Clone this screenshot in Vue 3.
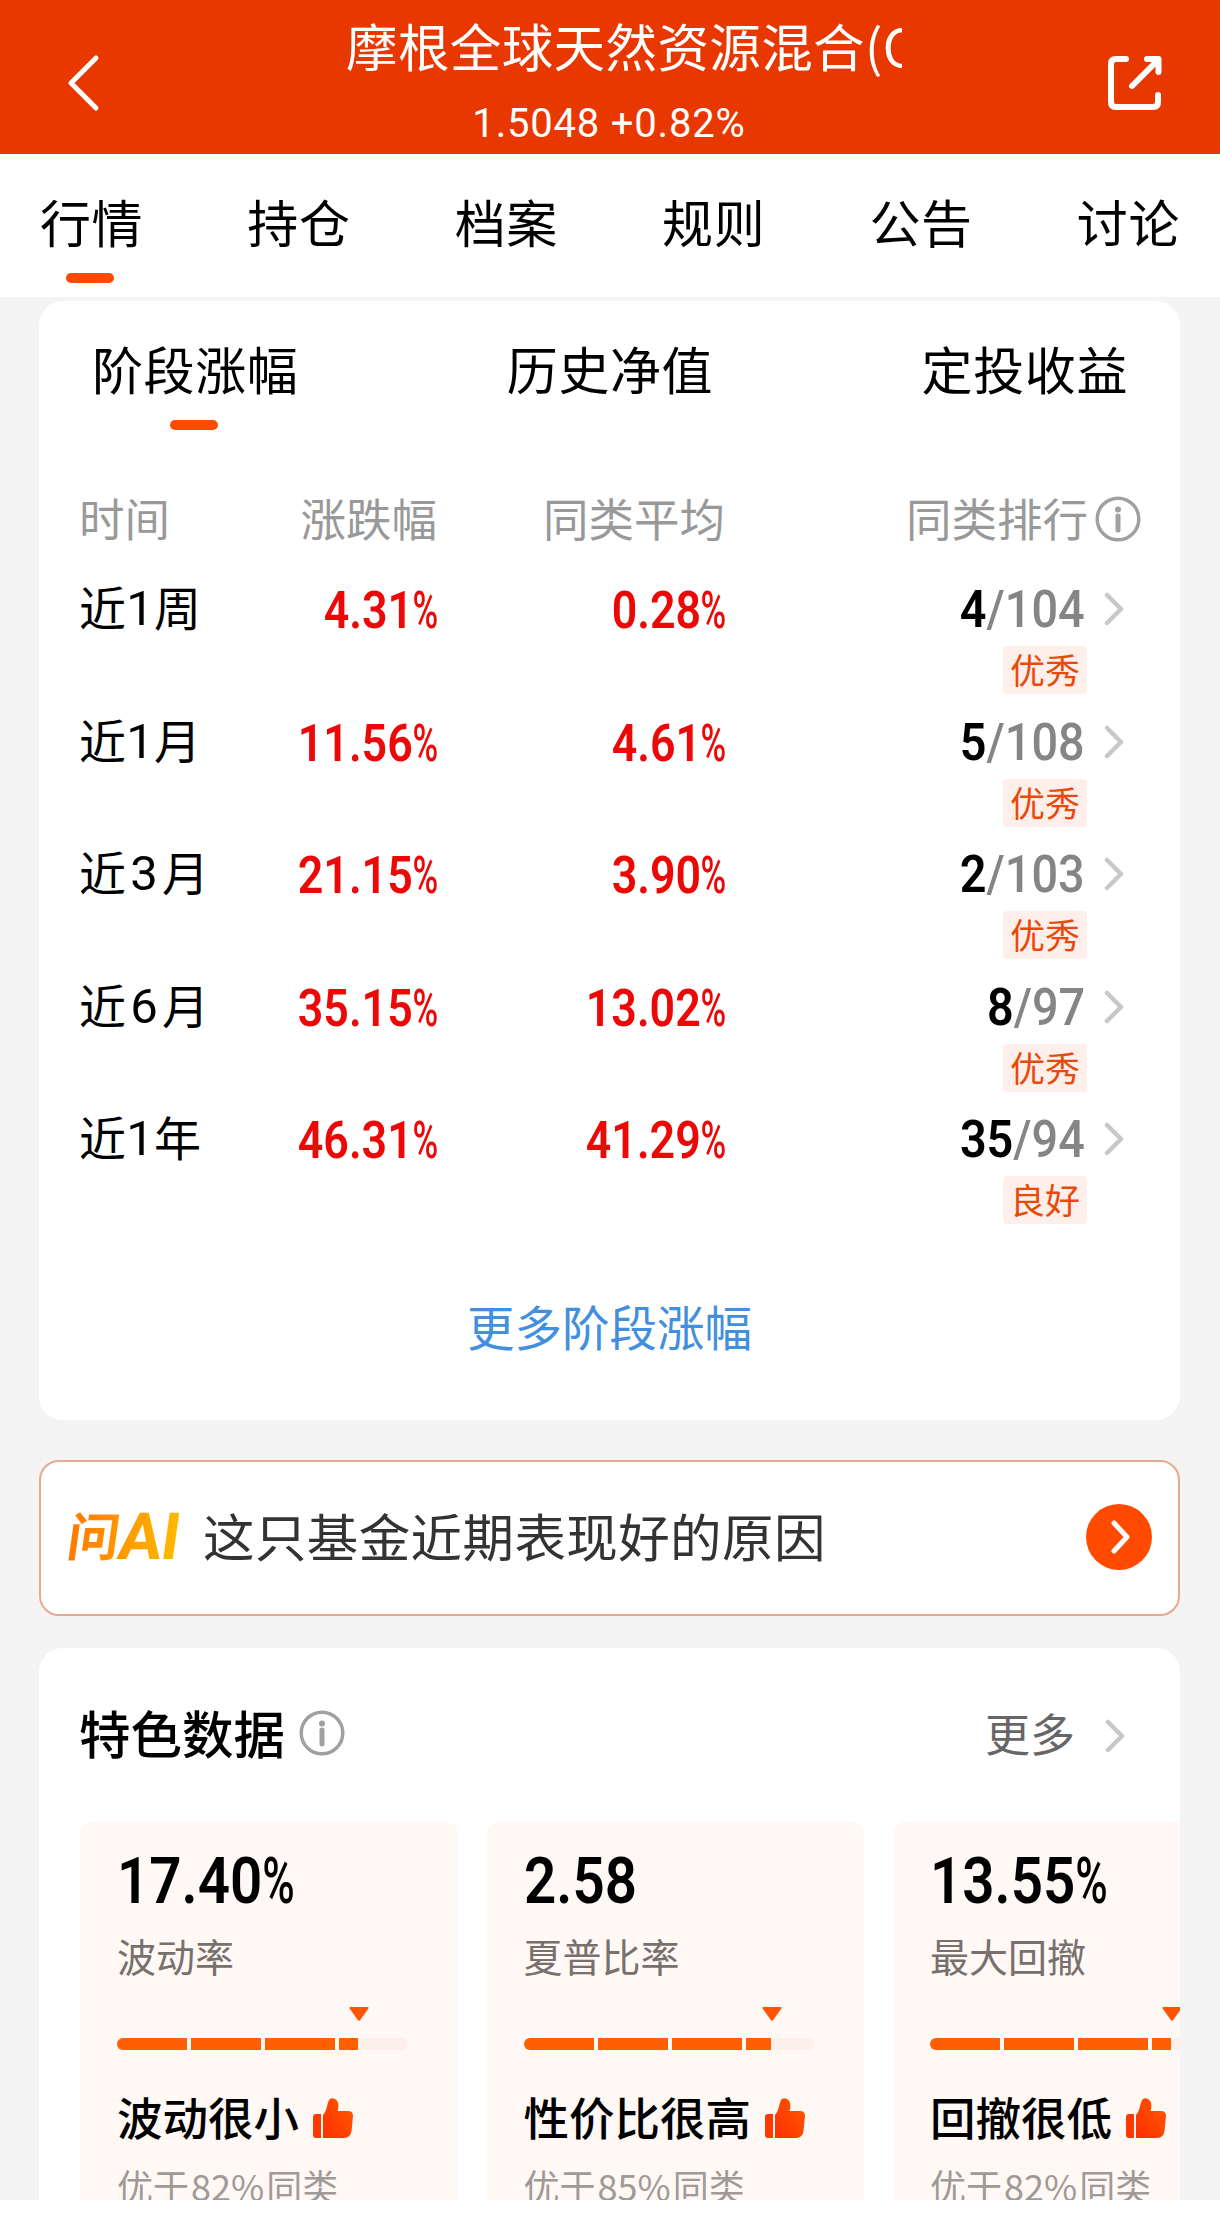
<template>
  <div class="page">
    <header class="header">
      <svg class="back" viewBox="0 0 34 58">
        <path d="M30 4 5 29 30 54" />
      </svg>
      <div class="fund">
        <h1>摩根全球天然资源混合(C</h1>
        <p>1.5048 +0.82%</p>
      </div>
      <svg class="share" viewBox="0 0 60 60">
        <path d="M21 6H11Q6 6 6 11V49Q6 54 11 54H48Q53 54 53 49V42" />
        <path d="M42 6H53.500V19M52 8 27 33" />
      </svg>
    </header>

    <nav class="tabs">
      <a v-for="(t, i) in tabs" :key="t" :class="{ active: i === 0 }">{{ t }}</a>
    </nav>

    <section class="card stage">
      <div class="sub-tabs">
        <a v-for="(t, i) in subTabs" :key="t" :class="{ active: i === 0 }">{{ t }}</a>
      </div>
      <div class="row head">
        <span>时间</span>
        <span class="right">涨跌幅</span>
        <span class="right">同类平均</span>
        <span class="rank-head">
          同类排行
          <svg class="info" viewBox="0 0 46 46">
            <circle cx="23" cy="23" r="20.8" />
            <circle class="dot" cx="23" cy="13.5" r="3" />
            <path d="M23 20V34" />
          </svg>
        </span>
      </div>
      <div v-for="r in rows" :key="r.num + r.unit" class="row item">
        <span class="period">近<i :class="{ wide: r.num !== 1 }">{{ r.num }}</i>{{ r.unit }}</span>
        <span class="right"><b class="din red">{{ r.rise }}<i class="pct">%</i></b></span>
        <span class="right"><b class="din red">{{ r.average }}<i class="pct">%</i></b></span>
        <div class="rank">
          <b class="din">{{ r.rank }}<span class="total">/{{ r.total }}</span></b>
          <em>{{ r.level }}</em>
        </div>
        <svg class="chevron" viewBox="0 0 20 34">
          <path d="M3 3 17 17 3 31" />
        </svg>
      </div>
      <a class="more-stage">更多阶段涨幅</a>
    </section>

    <section class="ask">
      <span class="logo"><i>问</i>AI</span>
      <p>这只基金近期表现好的原因</p>
      <svg class="go" viewBox="0 0 66 66">
        <circle cx="33" cy="33" r="33" />
        <path d="M28 19 41 33 28 47" />
      </svg>
    </section>

    <section class="card feature">
      <div class="feature-head">
        <h2>特色数据</h2>
        <svg class="info" viewBox="0 0 46 46">
          <circle cx="23" cy="23" r="20.8" />
          <circle class="dot" cx="23" cy="13.5" r="3" />
          <path d="M23 20V34" />
        </svg>
        <a>更多</a>
        <svg class="chevron" viewBox="0 0 20 34">
          <path d="M3 3 17 17 3 31" />
        </svg>
      </div>
      <div class="metrics">
        <div v-for="m in metrics" :key="m.name" class="metric">
          <b class="value">{{ m.value }}<i v-if="m.percent" class="pct">%</i></b>
          <span class="name">{{ m.name }}</span>
          <div class="gauge">
            <svg class="arrow" viewBox="0 0 20 14" :style="{ left: m.fill + 'px' }">
              <path d="M1.5 0H18.5Q20 0 19.4 1.4L11.2 13Q10 14.4 8.8 13L.6 1.4Q0 0 1.5 0Z" />
            </svg>
            <div class="bar">
              <div class="fill" :style="{ width: m.fill + 'px' }"></div>
            </div>
          </div>
          <div class="result">
            {{ m.result }}
            <svg class="thumb" viewBox="0 0 40 40">
              <defs>
                <linearGradient id="thumb" x1="0" y1="1" x2="1" y2="0">
                  <stop offset="0" stop-color="#ff2f00" />
                  <stop offset="1" stop-color="#ff5a00" />
                </linearGradient>
              </defs>
              <path fill="#ff3a00" d="M3 16H8V40H3Q0 40 0 37V19Q0 16 3 16Z" />
              <path
                fill="url(#thumb)"
                d="M10 17C14 13 14 6 16 2Q18-1 22 1C26 3 26 9 24.500 13H35Q40 13 40 18L38.500 33Q37.500 40 31 40H10Z"
              />
            </svg>
          </div>
          <span class="better">优于<i>{{ m.better }}%</i>同类</span>
        </div>
      </div>
    </section>
    <div class="bottom"></div>
  </div>
</template>

<script setup>
// Tabs
const tabs = ["行情", "持仓", "档案", "规则", "公告", "讨论"];
const subTabs = ["阶段涨幅", "历史净值", "定投收益"];

// Stage rows
const rows = [
  { num: 1, unit: "周", rise: "4.31", average: "0.28", rank: 4, total: 104, level: "优秀" },
  { num: 1, unit: "月", rise: "11.56", average: "4.61", rank: 5, total: 108, level: "优秀" },
  { num: 3, unit: "月", rise: "21.15", average: "3.90", rank: 2, total: 103, level: "优秀" },
  { num: 6, unit: "月", rise: "35.15", average: "13.02", rank: 8, total: 97, level: "优秀" },
  { num: 1, unit: "年", rise: "46.31", average: "41.29", rank: 35, total: 94, level: "良好" },
];

// Feature cards, fill is the bar length in px
const metrics = [
  { value: "17.40", percent: true, name: "波动率", fill: 241, result: "波动很小", better: 82 },
  { value: "2.58", percent: false, name: "夏普比率", fill: 247, result: "性价比很高", better: 85 },
  { value: "13.55", percent: true, name: "最大回撤", fill: 241, result: "回撤很低", better: 82 },
];
</script>

<style>
body {
  margin: 0;
  background: #f4f4f4;
}
</style>

<style scoped>
.page {
  width: 1220px;
  height: 2226px;
  overflow: hidden;
  display: flex;
  flex-direction: column;
  background: #f4f4f4;
  color: #000;
  font-family: "Noto Sans CJK SC", sans-serif;
}
.page * {
  box-sizing: border-box;
}
h1,
h2,
p {
  margin: 0;
  font-weight: 400;
}
i,
em {
  font-style: normal;
}
svg {
  display: block;
  flex: none;
  fill: none;
  stroke-linecap: round;
  stroke-linejoin: round;
}

/* header */
.header {
  height: 154px;
  flex: none;
  display: flex;
  padding: 0 55px 0 66px;
  background: #e93700;
  color: #fff;
}
.back {
  width: 34px;
  height: 58px;
  margin-top: 54px;
  stroke: #fff;
  stroke-width: 5;
}
.share {
  width: 60px;
  height: 60px;
  margin: 53px 0 0 auto;
  stroke: #fff;
  stroke-width: 6;
}
.fund {
  width: 556px;
  margin-left: 246px;
}
.fund h1 {
  height: 88px;
  overflow: hidden;
  white-space: nowrap;
  font-size: 51.500px;
  line-height: 90px;
  letter-spacing: 0.400px;
}
.fund p {
  margin-left: -30px;
  text-align: center;
  font-family: Roboto, sans-serif;
  font-size: 40px;
  line-height: 71px;
  letter-spacing: 0.800px;
}

/* tabs */
.tabs {
  height: 143px;
  flex: none;
  display: flex;
  justify-content: space-between;
  padding: 0 40px;
  background: #fff;
}
.tabs a,
.sub-tabs a {
  display: flex;
  flex-direction: column;
  font-size: 51px;
  line-height: 85px;
  letter-spacing: 0.600px;
}
.tabs a {
  padding-top: 25px;
}
.active::after {
  content: "";
  width: 48px;
  height: 10px;
  border-radius: 5px;
  background: #ff4a00;
}
.tabs .active::after {
  margin: 9px 0 0 26px;
}
.sub-tabs .active::after {
  margin: 9px 0 0 78px;
}

/* stage card */
.card {
  flex: none;
  margin: 0 40px 0 39px;
  background: #fff;
}
.stage {
  height: 1119px;
  margin-top: 4px;
  border-radius: 24px;
}
.sub-tabs {
  height: 176px;
  display: flex;
  justify-content: space-between;
  padding: 25px 52px 0 53px;
}
.row {
  display: grid;
  grid-template-columns: 130px 229px 288px 361px 35px;
  padding-left: 40px;
}
.right {
  text-align: right;
}
.head {
  height: 89px;
  color: #999;
  font-size: 45.500px;
  line-height: 80px;
}
.head .right {
  padding-right: 1px;
}
.rank-head {
  grid-column: span 2;
  display: flex;
  align-items: center;
  justify-content: flex-end;
  gap: 7px;
  height: 80px;
  margin-right: -19px;
}
.info {
  width: 46px;
  height: 46px;
  stroke: #a0a0a0;
  stroke-width: 3.500;
}
.rank-head .info {
  margin-top: 3px;
}
.info .dot {
  fill: #a0a0a0;
  stroke: none;
}
.info path {
  stroke-width: 5;
}
.item {
  height: 132.500px;
  line-height: 84px;
  font-size: 47px;
}
.period {
  display: flex;
  line-height: 79px;
}
.period i {
  width: 28px;
  padding-top: 3px;
  font-family: Roboto, sans-serif;
  font-size: 49px;
  text-align: center;
}
.period .wide {
  width: 38px;
}
.din {
  display: inline-block;
  font-family: Roboto, sans-serif;
  font-size: 52px;
  font-weight: 600;
  line-height: 84px;
  transform: scaleX(0.86);
  transform-origin: right;
}
.right .din {
  line-height: 81px;
}
.red {
  color: #ed0808;
}
.pct {
  display: inline-block;
  font-weight: 500;
  transform: scaleX(0.78);
  transform-origin: right;
  margin-left: -9px;
}
.rank {
  display: flex;
  flex-direction: column;
  align-items: flex-end;
}
.rank .din {
  margin-right: 2px;
  line-height: 88px;
  transform: scaleX(0.9);
}
.total {
  color: #858585;
  font-weight: 500;
}
.rank em {
  width: 84px;
  height: 48px;
  margin-top: -8px;
  border-radius: 4px;
  background: #ffefea;
  color: #e84a0c;
  font-size: 35px;
  line-height: 45px;
  text-align: center;
}
.chevron {
  width: 20px;
  height: 34px;
  stroke: #c8c8c8;
  stroke-width: 4.500;
}
.item .chevron {
  margin: 26px 0 0 17px;
}
.more-stage {
  display: block;
  margin-top: 57px;
  text-align: center;
  color: #428fdd;
  font-size: 47.500px;
  line-height: 80px;
}

/* ask ai */
.ask {
  height: 156px;
  flex: none;
  display: flex;
  align-items: center;
  margin: 40px 40px 32px 39px;
  padding: 0 26px 3px 27px;
  border: 2px solid #e8a98c;
  border-radius: 20px;
  background: #fff;
}
.logo {
  width: 135px;
  flex: none;
  display: flex;
  color: transparent;
  background: linear-gradient(90deg, #ff7800, #ffb800 108px);
  background-clip: text;
  font-family: Roboto, sans-serif;
  font-size: 65px;
  font-weight: 700;
  line-height: 76px;
  letter-spacing: -1px;
  transform: skewX(-8deg);
}
.logo i {
  width: 51px;
  font-family: "Noto Sans CJK SC", sans-serif;
  font-size: 52px;
  line-height: 70px;
}
.ask p {
  flex: 1;
  padding-bottom: 3px;
  color: #333;
  font-size: 51.500px;
  line-height: 80px;
  letter-spacing: 0.400px;
}
.go {
  width: 66px;
  height: 66px;
  fill: #ff4a00;
}
.go path {
  fill: none;
  stroke: #fff;
  stroke-width: 5;
}

/* feature card */
.feature {
  height: 552px;
  overflow: hidden;
  border-radius: 24px 24px 0 0;
}
.feature-head {
  height: 174px;
  display: flex;
  align-items: center;
  padding: 0 55px 4px 40px;
}
.feature-head h2 {
  margin: -2px 14px 0 0;
  font-size: 51.500px;
  font-weight: 500;
  line-height: 80px;
}
.feature-head a {
  margin: 0 30px 0 auto;
  color: #666;
  font-size: 45px;
  line-height: 80px;
}
.feature-head .chevron {
  margin-top: 6px;
}
.metrics {
  display: flex;
  gap: 29px;
  margin-left: 41px;
}
.metric {
  width: 377.500px;
  height: 420px;
  flex: none;
  display: flex;
  flex-direction: column;
  padding: 21px 0 0 37px;
  border-radius: 12px 12px 0 0;
  background: #fff8f5;
}
.value {
  align-self: flex-start;
  font-family: Roboto, sans-serif;
  font-size: 65px;
  font-weight: 600;
  line-height: 76px;
  transform: scaleX(0.87);
  transform-origin: left;
}
.value .pct {
  transform-origin: left;
  margin-left: 0;
}
.name {
  color: #77706d;
  font-size: 39px;
  line-height: 73px;
}
.gauge {
  position: relative;
  width: 291px;
  height: 80px;
  padding-top: 46px;
}
.arrow {
  position: absolute;
  top: 15px;
  width: 20px;
  height: 14px;
  margin-left: -9px;
  fill: #ff5500;
}
.bar {
  height: 12px;
  overflow: hidden;
  border-radius: 6px;
  background: #fdefe9;
}
.fill {
  height: 12px;
  background: repeating-linear-gradient(90deg, #ff5f00 0 70.500px, #fff8f5 70.500px 74px);
}
.result {
  display: flex;
  align-items: center;
  gap: 14px;
  font-size: 45.500px;
  font-weight: 500;
  line-height: 88px;
}
.thumb {
  width: 40px;
  height: 40px;
  margin-top: 3px;
}
.better {
  color: #a09a97;
  font-size: 36px;
  line-height: 50px;
}
.better i {
  margin: 0 2px;
}
.bottom {
  flex: 1;
  background: #fefefe;
}
</style>
